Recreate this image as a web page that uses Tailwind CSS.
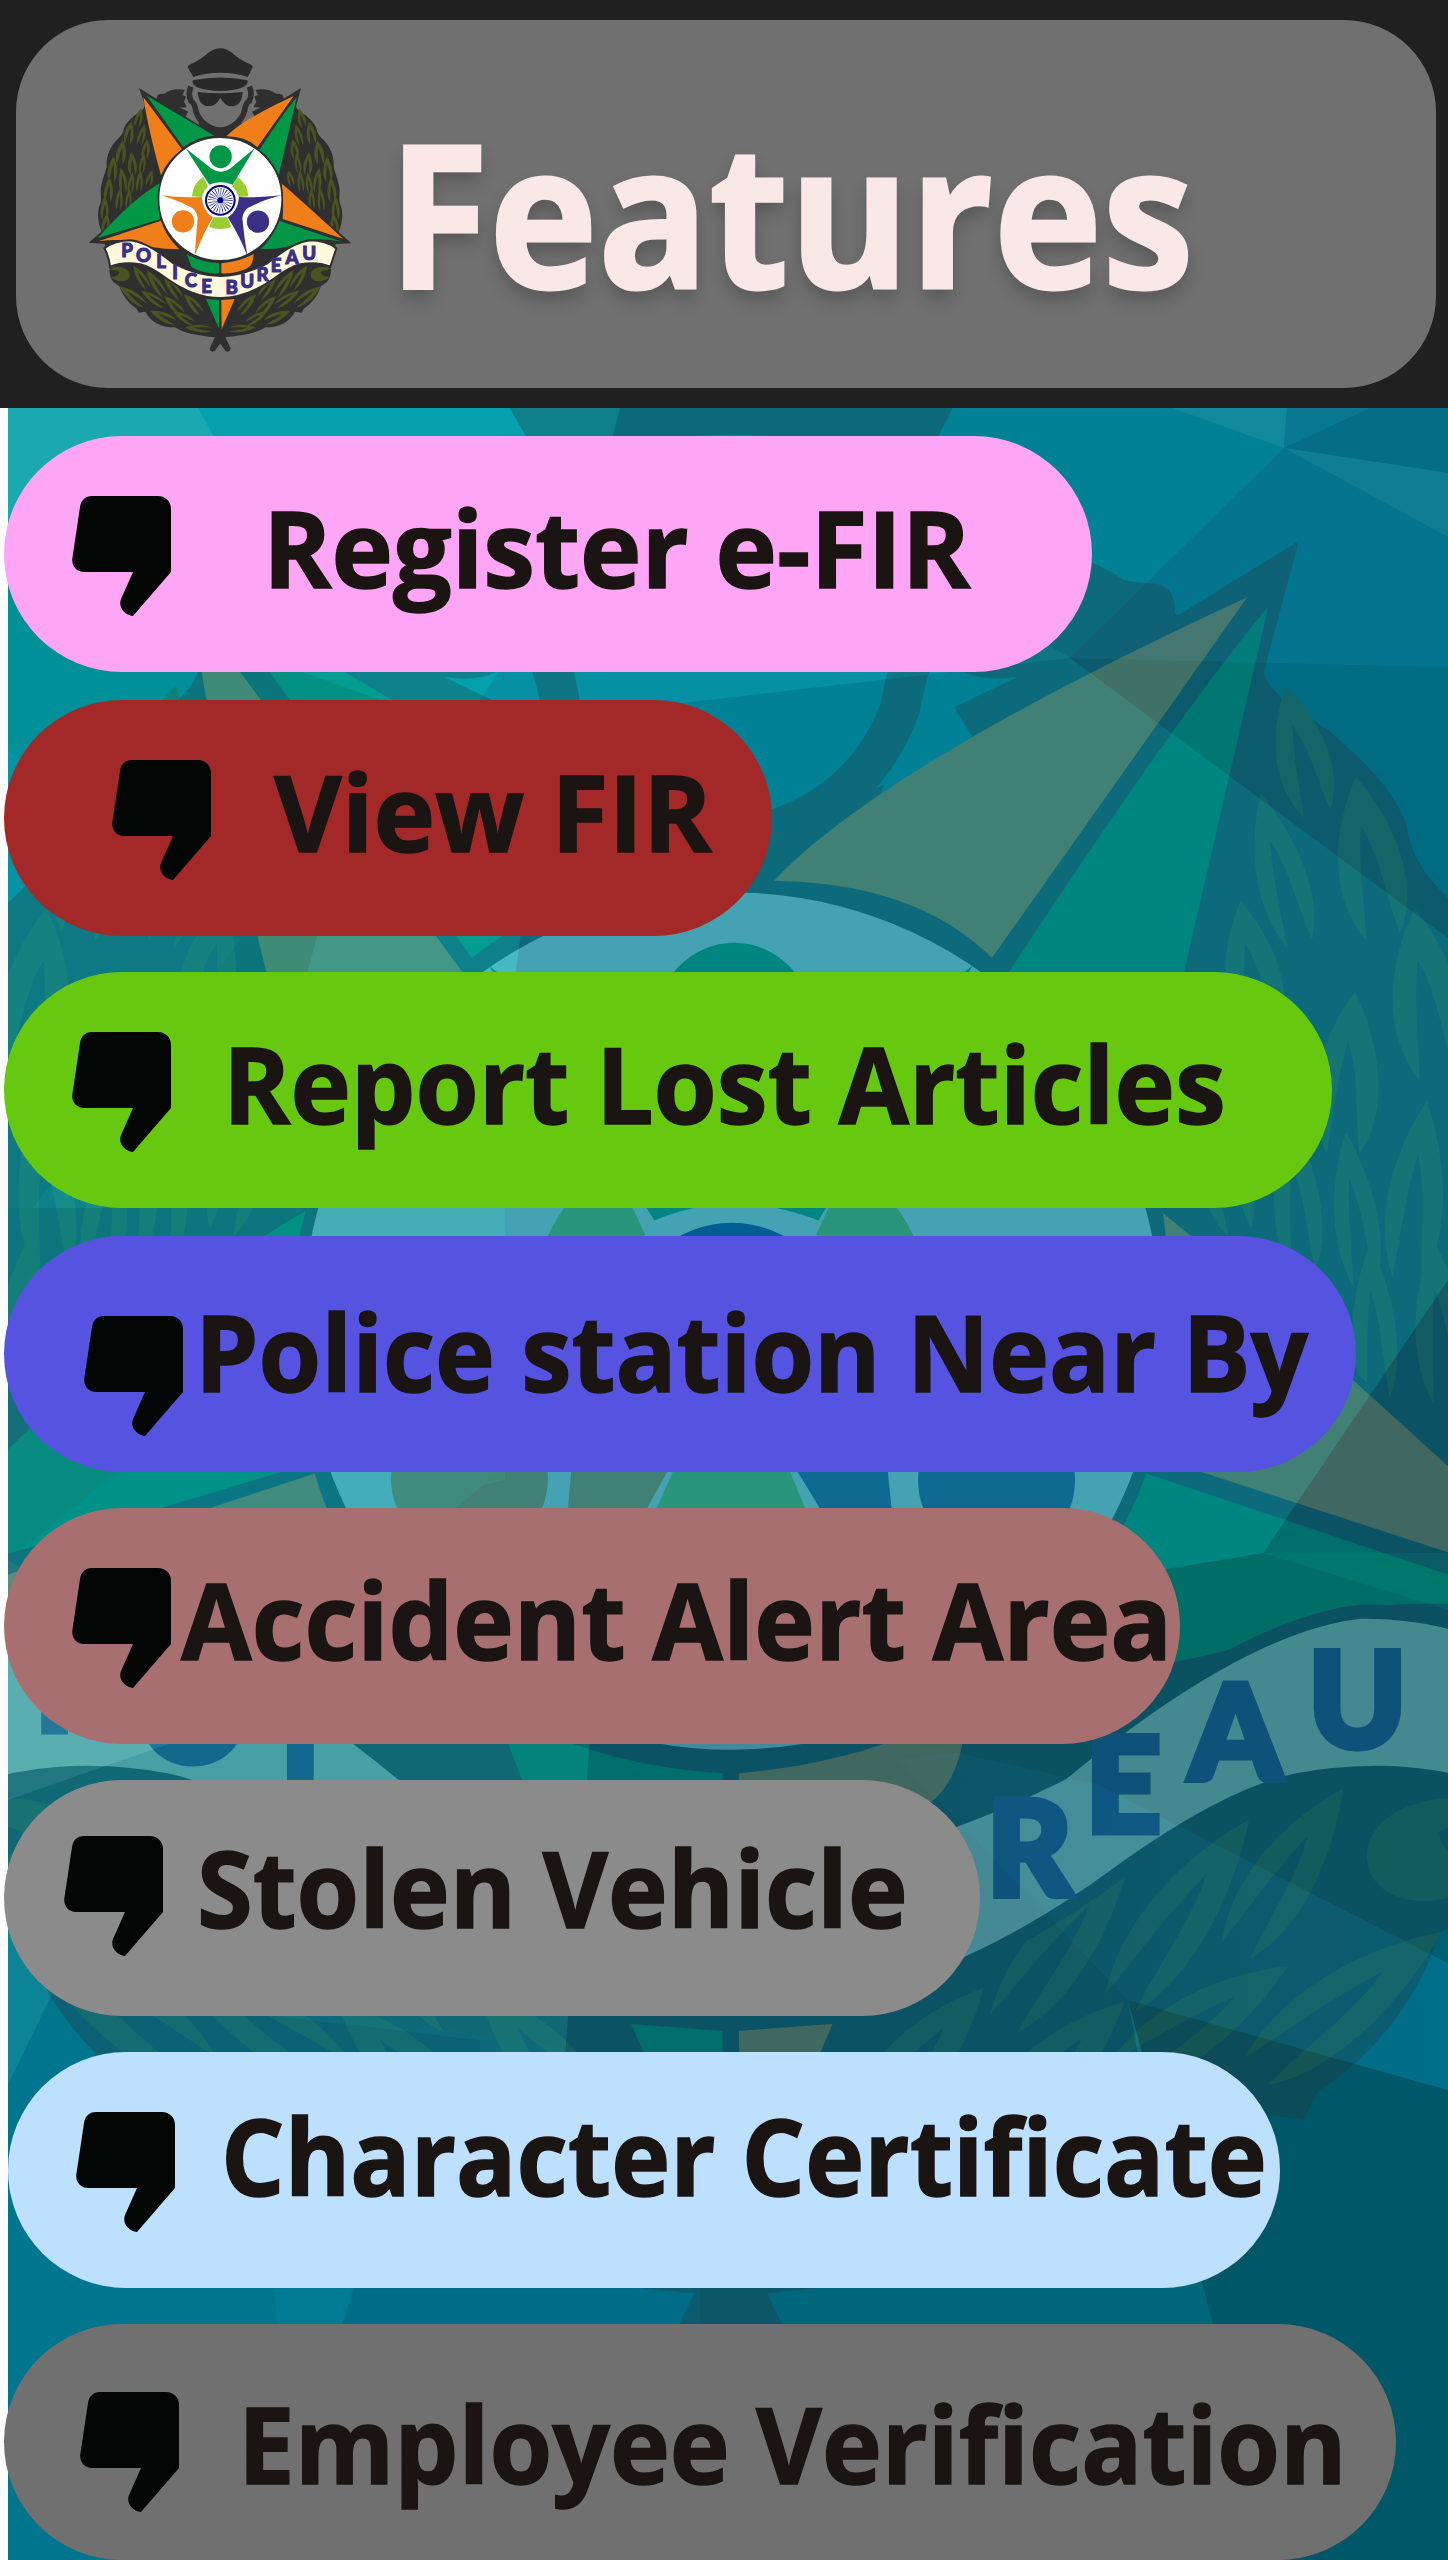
<!DOCTYPE html>
<html lang="en">
<head>
<meta charset="utf-8">
<title>Features</title>
<script src="https://cdn.jsdelivr.net/npm/@tailwindcss/browser@4"></script>
</head>
<body class="bg-white font-['Open_Sans',sans-serif]">

<!-- Shared symbols -->
<svg class="absolute" width="0" height="0" aria-hidden="true">
  <defs>
    <symbol id="thumb" viewBox="0 0 99 120">
      <path fill="#040605" d="M20 0H86C93.500 0 99 5.500 99 13V76L61 120C52 118.500 46 111 49 103L61 76H12C4.500 76 -.5 70 .3 62.500L8 11C9.200 4 13 0 20 0Z"/>
    </symbol>
    <linearGradient id="facet" x1="0" x2="1"><stop offset="0" stop-color="#00637d"/><stop offset="1" stop-color="#006f89"/></linearGradient>
    <path id="leaf" d="M-5 32C-17 16 -15 -10 -3 -34C11 -16 20 10 9 32C6 16 5 2 0 -14C-5 0 -3 18 -5 32Z"/>
    <g id="wreath">
      <path fill="#2f2f2f" d="M256 248C254 270 240 275 225 285C208 300 198 310 192 325C190 340 182 350 168 362C152 380 138 405 140 440C136 460 125 480 122 510C122 530 126 545 117 560C112 585 114 610 124 632L150 735C145 765 152 785 178 798C186 825 205 850 230 866L236 878L256 875C272 905 300 922 345 922C370 940 420 948 465 952L449 985Q450 998 464 994L481 970L481 330L420 320Z"/>
      <g fill="#4b5320">
        <use href="#leaf" transform="translate(237 294) rotate(18) scale(.85)"/>
        <use href="#leaf" transform="translate(208 340) rotate(14) scale(1.050)"/>
        <use href="#leaf" transform="translate(246 345) rotate(18) scale(.8 1)"/>
        <use href="#leaf" transform="translate(258 388) rotate(14) scale(.9)"/>
        <use href="#leaf" transform="translate(184 398) rotate(12) scale(1.100)"/>
        <use href="#leaf" transform="translate(217 432) rotate(0) scale(1 1.050)"/>
        <use href="#leaf" transform="translate(248 430) rotate(12) scale(.7 .9)"/>
        <use href="#leaf" transform="translate(158 448) rotate(8) scale(1.050 1.150)"/>
        <use href="#leaf" transform="translate(188 482) rotate(-3) scale(.9 1.150)"/>
        <use href="#leaf" transform="translate(214 490) rotate(10) scale(.7 1)"/>
        <use href="#leaf" transform="translate(239 484) rotate(8) scale(.75 1)"/>
        <use href="#leaf" transform="translate(270 476) rotate(20) scale(.75)"/>
        <use href="#leaf" transform="translate(146 510) rotate(8) scale(1 1.150)"/>
        <use href="#leaf" transform="translate(178 538) rotate(8) scale(.8 1.050)"/>
        <use href="#leaf" transform="translate(206 538) rotate(6) scale(.7 1)"/>
        <use href="#leaf" transform="translate(134 566) rotate(4) scale(.9 1.100)"/>
        <use href="#leaf" transform="translate(138 612) rotate(10) scale(.9 .9)"/>
        <path d="M150 745C170 735 208 742 209 765C208 790 170 790 152 770C165 772 178 765 178 755C170 750 160 755 150 745Z"/>
        <use href="#leaf" transform="translate(243 772) rotate(-30) scale(1 1.250)"/>
        <use href="#leaf" transform="translate(288 790) rotate(-32) scale(1.050 1.450)"/>
        <use href="#leaf" transform="translate(338 802) rotate(-34) scale(1 1.350)"/>
        <use href="#leaf" transform="translate(218 828) rotate(-50) scale(1.100 1.500)"/>
        <use href="#leaf" transform="translate(280 836) rotate(-54) scale(.95 1.300)"/>
        <use href="#leaf" transform="translate(342 856) rotate(-42) scale(1 1.200)"/>
        <use href="#leaf" transform="translate(400 852) rotate(-38) scale(1 1.200)"/>
        <use href="#leaf" transform="translate(310 890) rotate(-62) scale(1.050 1.250)"/>
        <use href="#leaf" transform="translate(372 893) rotate(-56) scale(.9 1.100)"/>
        <use href="#leaf" transform="translate(415 925) rotate(-82) scale(.85 1.200)"/>
      </g>
    </g>
    <symbol id="emblem" viewBox="0 0 960 1050" overflow="visible">
      <!-- officer -->
      <g fill="#2f2f2f">
        <path id="shoulder" d="M258 250L291 235Q290 222 302 222L312 221Q340 202 375 210L367 224L378 230L372 245L380 260Q372 264 358 262L385 275L370 300L430 330L330 310Z"/>
        <use href="#shoulder" transform="translate(961 0) scale(-1 1)"/>
      </g>
      <path fill="none" stroke="#2f2f2f" stroke-width="17" d="M393 200Q383 222 393 243Q404 248 408 275Q425 322 481 332Q536 322 553 275Q557 248 568 243Q578 222 568 200"/>
      <path fill="#2f2f2f" d="M415 308Q481 335 546 308L530 352H430Z"/>
      <g fill="#292929">
        <path d="M383 142Q382 137 388 134Q420 122 447 97Q481 72 514 97Q541 122 573 134Q579 137 578 142L563 171Q481 146 400 171Z"/>
        <path d="M397 186Q396 181 402 180Q481 165 559 180Q565 181 563 186Q560 210 481 213Q401 210 397 186Z"/>
        <path d="M413 216Q481 224 548 216Q545 258 515 259Q492 257 481 233Q470 257 446 259Q416 258 413 216Z"/>
      </g>
      <!-- laurel -->
      <use href="#wreath"/>
      <use href="#wreath" transform="translate(961 0) scale(-1 1)"/>
      <!-- star -->
      <path fill="#2f2f2f" d="M237 204L450 335H510L723 204L700 290L663 480L720 535L874 670L830 672L590 720L550 800L481 950L411 800L370 720L140 672L86 668L240 535L300 480L262 330L253 250Z"/>
      <g fill="#f07f1a">
        <path d="M250 232Q290 285 366 388Q322 420 303 466Q265 330 250 232Z"/>
        <path d="M701 228Q545 300 499 349Q560 350 592 382Z"/>
        <path d="M115 664L303 602Q315 645 358 688Q270 688 210 663Q170 656 115 664Z"/>
        <path d="M849 656L668 597Q672 540 665 491Q690 510 849 656Z"/>
        <path d="M484 730Q540 725 581 702Q580 735 562 745Q530 762 484 760Z"/>
        <path d="M484 840L524 837L485 928Z"/>
      </g>
      <g fill="#009846">
        <path d="M260 227L463 347Q410 350 370 382Q320 310 260 227Z"/>
        <path d="M710 232Q670 280 598 390Q635 415 656 466Z"/>
        <path d="M113 654Q220 535 299 490Q292 545 300 598Z"/>
        <path d="M846 665L658 602Q640 650 603 687Q680 688 725 665Q770 650 846 665Z"/>
        <path d="M380 703Q425 727 477 730V760Q430 762 395 742Z"/>
        <path d="M438 837L477 840V926Z"/>
      </g>
      <circle cx="481" cy="537" r="185.500" fill="#fefefe" stroke="#2f2f2f" stroke-width="5"/>
      <!-- three figures around the wheel -->
      <g fill="#9acd32">
        <path id="arc" d="M396 529Q398 490 430 470L444 500Q430 512 426 531Z"/>
        <use href="#arc" transform="translate(961 0) scale(-1 1)"/>
        <path d="M460 592H502L514 621Q481 633 447 621Z"/>
      </g>
      <g fill="#009846">
        <ellipse cx="482" cy="410" rx="33.500" ry="34.500"/>
        <path d="M377 385L455 446Q482 464 510 446L584 385L518 494Q481 480 448 494Z"/>
      </g>
      <g fill="#f07f1a">
        <circle cx="369" cy="604" r="33.500"/>
        <path d="M303 526Q360 534 425 531Q428 575 459 592Q430 640 404 707Q408 650 413 595Q410 565 385 558Q350 540 303 526Z"/>
      </g>
      <g fill="#3a2f87">
        <circle cx="594" cy="605" r="33.500"/>
        <path d="M664 526Q600 534 537 531Q534 575 503 592Q535 640 562 707Q552 650 547 595Q550 565 576 558Q610 540 664 526Z"/>
      </g>
      <circle cx="481" cy="541" r="50" fill="#fefefe"/>
      <circle cx="481" cy="541" r="43" fill="none" stroke="#000088" stroke-width="6"/>
      <circle cx="481" cy="541" r="22" fill="none" stroke="#000088" stroke-width="30" stroke-dasharray="1.440 4.320"/>
      <circle cx="481" cy="541" r="9" fill="#000088"/>
      <!-- ribbon -->
      <path fill="#fff9dc" stroke="#2f2f2f" stroke-width="6" d="M133 685Q165 661 212 661Q262 666 340 730Q415 768 481 768Q547 768 622 730Q700 666 750 661Q797 661 829 685L811 740Q770 724 722 733Q690 740 640 777Q560 834 481 834Q402 834 322 777Q272 740 240 733Q192 724 150 740Q147 710 133 685Z"/>
      <g fill="#3a2f87" stroke="#3a2f87" stroke-width="3" font-family="Lato, sans-serif" font-weight="900" font-size="56" text-anchor="middle">
        <text x="201" y="712">P</text><text x="251" y="725">O</text><text x="303" y="745">L</text>
        <text x="345" y="776">I</text><text x="393" y="800">C</text><text x="440" y="820">E</text>
        <text x="515" y="823">B</text><text x="562" y="803">U</text><text x="608" y="782">R</text>
        <text x="648" y="755">E</text><text x="696" y="733">A</text><text x="748" y="719">U</text>
      </g>
    </symbol>
  </defs>
</svg>

<div class="relative h-[2560px] w-[1448px] overflow-hidden">

  <header class="h-[408px] bg-[#202020] px-[16px] py-[20px] pr-[12px]">
    <div class="flex h-[368px] items-start rounded-[92px] bg-[#707070]">
      <svg class="ml-[44px] h-[350px] w-[320px] shrink-0"><use href="#emblem"/></svg>
      <h1 class="mt-[55px] ml-[8px] origin-left scale-x-[0.925] text-[199px] leading-[272px] font-bold whitespace-nowrap text-[#fae8e8] [-webkit-text-stroke:3px_#fae8e8] [text-shadow:0_10px_18px_rgba(0,0,0,0.22)]">Features</h1>
    </div>
  </header>

  <!-- Faceted backdrop with the faded emblem -->
  <svg class="absolute top-[408px] left-[8px] h-[2152px] w-[1440px]" viewBox="8 408 1440 2152">
    <rect x="8" y="408" width="1440" height="2152" fill="#008196"/>
    <path fill="#04a0ae" d="M8 408H620L560 640L480 1240L8 1300Z"/>
    <path fill="#1ba8b0" d="M8 408H198L260 520L8 600Z"/>
    <path fill="#009099" d="M8 520L160 620L380 700L300 1000L8 1000Z"/>
    <path fill="#0494a3" d="M8 750L240 940L8 1240Z"/>
    <path fill="#0590a3" d="M560 580L1040 640L1070 658L640 708L480 700Z"/>
    <path fill="#12889c" d="M1172 408H1287L1284 448Z"/>
    <path fill="#07788f" d="M1287 408H1370L1284 448Z"/>
    <path fill="#056d86" d="M1370 408H1448V473L1284 448Z"/>
    <path fill="#107d94" d="M1284 448L1448 473V537Z"/>
    <path fill="#05748f" d="M1284 448L1448 537V667L1070 658Z"/>
    <path fill="#006c83" d="M1070 658L1448 667V938Z"/>
    <path fill="#008f9b" d="M8 1240L8 1208H505V1480L8 1600Z"/>
    <path fill="#0a8796" d="M8 1340L120 1480L8 1560Z"/>
    <path fill="#008fa3" d="M8 1560L120 1470L500 1470L180 1750L8 1850Z"/>
    <path fill="#1e93a0" d="M8 1560L200 1680L180 1750L8 1850Z"/>
    <path fill="#067e90" d="M180 1740L8 1800V1960L640 2060L600 1740Z"/>
    <path fill="#00607a" d="M590 1740L800 1660L1100 1585L1263 1553L1448 1280V1965L1128 2000L1150 2120H560Z"/>
    <path fill="#006c7b" d="M1263 1553L1448 1553V1610Z"/>
    <path fill="url(#facet)" d="M1020 1745L1448 1963V2090L1128 2000L900 1760Z"/>
    <path fill="#005f74" d="M1040 1590L1263 1553L1448 1610V1963L1100 1785L900 1740Z"/>
    <path fill="#0b8495" d="M8 1900L54 1990L8 2085Z"/>
    <path fill="#00758e" d="M54 1990L480 2040V2560H8V2085Z"/>
    <path fill="#007a95" d="M270 2240L368 2240L340 2330H278Z"/>
    <path fill="#006c88" d="M368 2250H700V2360H330Z"/>
    <path fill="#00677d" d="M700 2250H1210L1240 2400H700Z"/>
    <path fill="#005768" d="M1128 2000L1448 2090V2560H1280L1213 2324Z"/>
    <use href="#emblem" opacity=".27" x="-395" y="63" width="2249" height="2460"/>
  </svg>

  <ul class="relative flex flex-col items-start pt-[28px] text-[106px] leading-[144px] font-bold text-[#1a1413] [-webkit-text-stroke:1.5px_#1a1413] [font-variant-ligatures:none]">
    <li class="ml-[4px] flex h-[236px] w-[1088px] items-start rounded-full bg-[#ffa5f6]">
      <svg class="mt-[60px] ml-[68px] h-[120px] w-[99px] shrink-0"><use href="#thumb"/></svg>
      <span class="mt-[39px] ml-[92px] origin-left scale-x-[0.98] whitespace-nowrap">Register e-FIR</span>
    </li>
    <li class="mt-[28px] ml-[4px] flex h-[236px] w-[768px] items-start rounded-full bg-[#a32828]">
      <svg class="mt-[60px] ml-[108px] h-[120px] w-[99px] shrink-0"><use href="#thumb"/></svg>
      <span class="mt-[39px] ml-[63px] origin-left scale-x-[0.983] whitespace-nowrap">View FIR</span>
    </li>
    <li class="mt-[36px] ml-[4px] flex h-[236px] w-[1328px] items-start rounded-full bg-[#66c90f]">
      <svg class="mt-[60px] ml-[68px] h-[120px] w-[99px] shrink-0"><use href="#thumb"/></svg>
      <span class="mt-[39px] ml-[52px] origin-left scale-x-[0.9636] whitespace-nowrap">Report Lost Articles</span>
    </li>
    <li class="mt-[28px] ml-[4px] flex h-[236px] w-[1352px] items-start rounded-full bg-[#5553e0]">
      <svg class="mt-[80px] ml-[80px] h-[120px] w-[99px] shrink-0"><use href="#thumb"/></svg>
      <span class="mt-[43px] ml-[12px] origin-left scale-x-[0.955] whitespace-nowrap">Police station Near By</span>
    </li>
    <li class="mt-[36px] ml-[4px] flex h-[236px] w-[1176px] items-start rounded-full bg-[#a76f6f]">
      <svg class="mt-[60px] ml-[68px] h-[120px] w-[99px] shrink-0"><use href="#thumb"/></svg>
      <span class="mt-[39px] ml-[10px] origin-left scale-x-[0.967] whitespace-nowrap">Accident Alert Area</span>
    </li>
    <li class="mt-[36px] ml-[4px] flex h-[236px] w-[976px] items-start rounded-full bg-[#8b8b8b]">
      <svg class="mt-[56px] ml-[60px] h-[120px] w-[99px] shrink-0"><use href="#thumb"/></svg>
      <span class="mt-[35px] ml-[34px] origin-left scale-x-[0.9536] whitespace-nowrap">Stolen Vehicle</span>
    </li>
    <li class="mt-[36px] ml-[8px] flex h-[236px] w-[1272px] items-start rounded-full bg-[#bde0ff]">
      <svg class="mt-[60px] ml-[68px] h-[120px] w-[99px] shrink-0"><use href="#thumb"/></svg>
      <span class="mt-[31px] ml-[46px] origin-left scale-x-[0.9427] whitespace-nowrap">Character Certificate</span>
    </li>
    <li class="mt-[36px] ml-[4px] flex h-[236px] w-[1392px] items-start rounded-full bg-[#707070]">
      <svg class="mt-[68px] ml-[76px] h-[120px] w-[99px] shrink-0"><use href="#thumb"/></svg>
      <span class="mt-[47px] ml-[59px] origin-left scale-x-[0.9565] whitespace-nowrap">Employee Verification</span>
    </li>
  </ul>
</div>
</body>
</html>
